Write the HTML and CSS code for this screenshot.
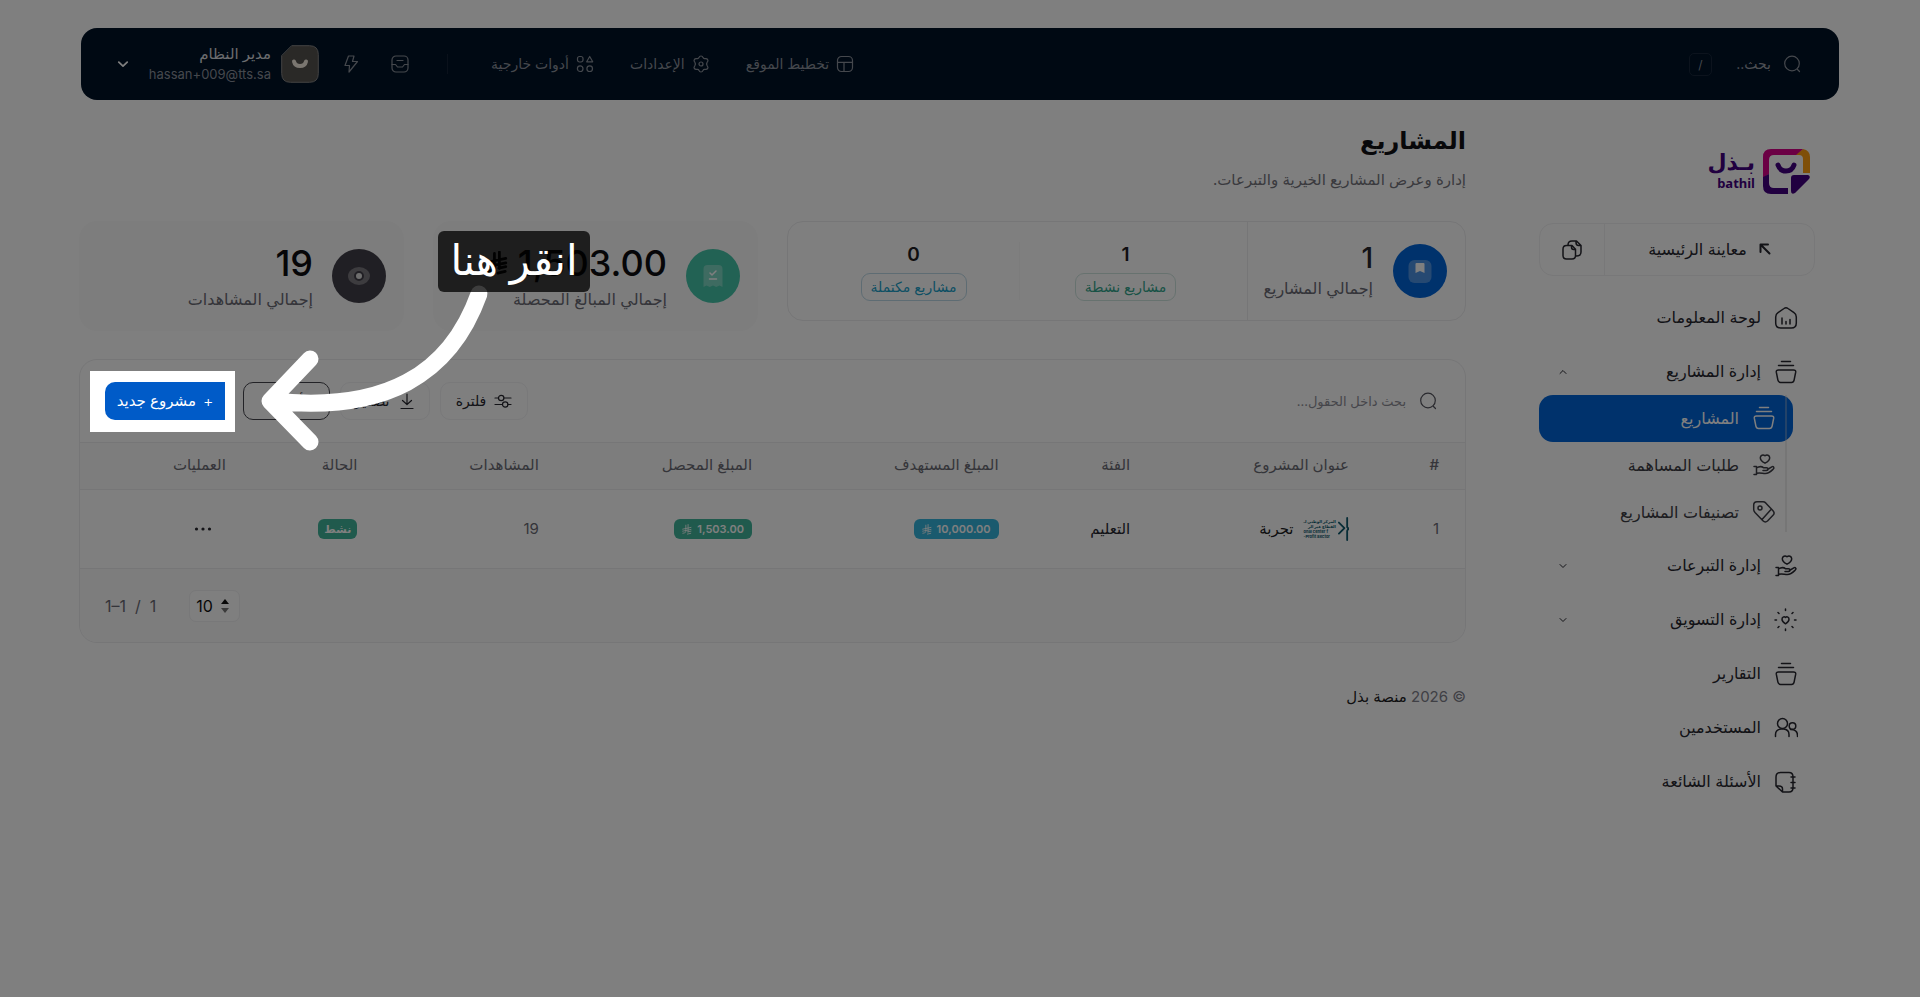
FILE: index.html
```html
<!DOCTYPE html>
<html lang="ar" dir="rtl">
<head>
<meta charset="utf-8">
<title>المشاريع</title>
<link rel="stylesheet" href="styles.css">
</head>
<body>
<svg class="defs" aria-hidden="true">
  <symbol id="search" viewBox="0 0 18 18"><circle cx="9" cy="8.500" r="7.300"/><path d="M14.500 14.500l2 2"/></symbol>
  <symbol id="basket" viewBox="0 0 24 24"><path d="M7.500 1.500h9M4.500 5.500h15M4.500 10h15q2.500 0 2.200 2.200l-1.600 8q-.5 2.300-2.600 2.300h-11q-2.100 0-2.600-2.300L2.300 12.200Q2 10 4.500 10z"/></symbol>
  <symbol id="hand" viewBox="0 0 24 24"><path d="M13 10.200C9 8 8.300 6.500 8.300 4.700c0-2.400 2.800-3.600 4.700-1.900 1.900-1.700 4.700-.5 4.700 1.900 0 1.800-.7 3.300-4.700 5.500zM2 13.500h2.500v8H2M4.500 15c3-2 5.500-1.500 7.300-.2h2.700c2 0 2 2.700 0 2.700h-3.500M15.500 16.500l4.300-2.700c1.600-.9 2.900.9 1.500 2.200-2 2-4 4.500-8 4.500-3 0-5-1.200-8.800-.2"/></symbol>
  <symbol id="down" viewBox="0 0 10 10"><path d="M2 3.500l3 3 3-3"/></symbol>
  <symbol id="up" viewBox="0 0 10 10"><path d="M2 6.500l3-3 3 3"/></symbol>
  <symbol id="riyal" viewBox="0 0 12 12"><path d="M4.600.8v7.400q0 1.500-1.800 1.900L1 10.500M7.300 0v9M.8 5.600l10-2.100M.8 8l10-2.100M7 8.800l3.800-.8M6.500 11.500l4-.9"/></symbol>
</svg>

<header class="topbar">
  <label class="quick"><svg class="i18"><use href="#search"/></svg><input class="quick-input" type="search" placeholder="بحث.."></label>
  <kbd class="key">/</kbd>
  <nav class="menu">
    <a href="#" class="menu-link"><svg class="i18" viewBox="0 0 18 18"><rect x="1.500" y="1.500" width="15" height="15" rx="4"/><path d="M1.500 7.300h15M8 7.300v9.200"/></svg>تخطيط الموقع</a>
    <a href="#" class="menu-link"><svg class="i18" viewBox="0 0 18 18"><path d="M9 1q1.500 0 2 1.600.6 1.400 2.200 1 1.800-.3 2.500 1 .8 1.300-.5 2.600-1.200 1.800 0 3.600 1.300 1.300.5 2.600-.7 1.300-2.500 1-1.600-.4-2.200 1Q10.500 17 9 17t-2-1.600q-.6-1.400-2.200-1-1.800.3-2.500-1-.8-1.300.5-2.600 1.200-1.800 0-3.600-1.300-1.300-.5-2.600.7-1.300 2.500-1 1.600.4 2.200-1Q7.500 1 9 1z"/><circle cx="9" cy="9" r="2"/></svg>الإعدادات</a>
    <a href="#" class="menu-link"><svg class="i18" viewBox="0 0 18 18"><rect x="1.500" y="1.500" width="5.500" height="5.500" rx="2"/><path d="M13.700 1.500l3 5.300h-6z"/><circle cx="4.200" cy="13.700" r="2.800"/><circle cx="13.700" cy="13.700" r="2.800"/></svg>أدوات خارجية</a>
  </nav>
  <span class="bar-line"></span>
  <button class="icon-btn" aria-label="الوارد"><svg class="i18" viewBox="0 0 18 18"><rect x="1" y="1" width="16" height="16" rx="4"/><path d="M1 9.500h3.500l2 2.500h5l2-2.500H17M6 5.500h6"/></svg></button>
  <button class="icon-btn bolt" aria-label="إجراءات سريعة"><svg class="i18" viewBox="0 0 18 18"><path d="M6.500 1h5.500l-1.500 5.500h5L7 17l.5-6.500H3z"/></svg></button>
  <button class="account">
    <svg class="avatar" viewBox="0 0 38 38"><path class="avatar-bg" d="M11 .7h17.500q8.800 0 8.800 8.800v19q0 8.800-8.800 8.800h-19q-8.800 0-8.800-8.800V11z"/><path class="avatar-smile" d="M13 16.500q1 4.500 6 4.500t6-4.500"/></svg>
    <span class="who"><strong class="who-name">مدير النظام</strong><span class="who-mail" dir="ltr">hassan+009@tts.sa</span></span>
    <svg class="who-more" viewBox="0 0 10 10"><path d="M1.500 3.500l3.500 3.200 3.500-3.200"/></svg>
  </button>
</header>

<div class="layout">
  <aside class="side">
    <a href="#" class="brand">
      <svg class="brand-mark" viewBox="0 0 47 45"><path class="orange" d="M40 0q7 1.500 7 8v16h-7V10q0-4-4-4h-4z"/><path class="pink" d="M8 0h32l-7 6H11Q6 6 6 11v14l-6 4V8q0-8 8-8z"/><path class="violet" d="M0 28l6-3v9q0 5 5 5h14v6H8q-8 0-8-8zM31 26h14q3 1 1 4L32 44q-4 2-4-2V29q0-3 3-3z"/><path class="smile" d="M15 16q2 6 8 6t8-6"/></svg>
      <span class="brand-text"><span class="brand-ar">بـذل</span><span class="brand-en" dir="ltr">bathil</span></span>
    </a>
    <div class="preview">
      <a href="#" class="preview-link"><svg class="i12" viewBox="0 0 12 12"><path d="M1.500 9V1.500H9M2 2l8.500 8.500"/></svg>معاينة الرئيسية</a>
      <button class="preview-copy" aria-label="نسخ"><svg class="i20" viewBox="0 0 20 20"><path d="M6 5.500V5q0-4 4-4h4.500L19 5.500V12q0 4-4.500 4M14 1v1.500q0 3 2.500 3H19M1 9q0-3.500 3.500-3.500H10l3.500 3.800V15.500q0 3.500-3.500 3.500H4.500Q1 19 1 15.500zM9.500 5.500V7q0 2.500 2 2.500h2"/></svg></button>
    </div>
    <nav class="nav">
      <a href="#" class="item"><svg class="i24" viewBox="0 0 24 24"><path d="M10 2.500q2-1.500 4 0l6 4.200q2.300 1.500 2.300 4.300v6q0 5-5 5H6.700q-5 0-5-5v-6q0-2.800 2.300-4.300zM8 12v6M12 15.500V18M16 13.500V18"/></svg><span class="label">لوحة المعلومات</span></a>
      <div class="group">
        <a href="#" class="item"><svg class="i24"><use href="#basket"/></svg><span class="label">إدارة المشاريع</span><svg class="chev"><use href="#up"/></svg></a>
        <div class="sub">
          <a href="#" class="subitem active"><svg class="i24"><use href="#basket"/></svg>المشاريع</a>
          <a href="#" class="subitem"><svg class="i24"><use href="#hand"/></svg>طلبات المساهمة</a>
          <a href="#" class="subitem"><svg class="i24" viewBox="0 0 24 24"><path d="M5 1.700h6q1.500 0 2.700 1.200l7.300 7.800q2.200 2.300 0 4.600L15.500 21q-2.300 2-4.600-.3L3 12.500Q1.700 11 1.700 9.500V5q0-3.300 3.300-3.300zM10 19.500l9-10"/><circle cx="8" cy="8" r="2"/></svg>تصنيفات المشاريع</a>
        </div>
      </div>
      <a href="#" class="item"><svg class="i24"><use href="#hand"/></svg><span class="label">إدارة التبرعات</span><svg class="chev"><use href="#down"/></svg></a>
      <a href="#" class="item"><svg class="i24" viewBox="0 0 24 24"><path d="M11.500 15.800C8.500 14 8 12.800 8 11.200c0-2.100 2-3 3.500-1.800C13 8.200 15 9.100 15 11.200c0 1.600-.5 2.800-3.500 4.600zM11.500 1v1.500M11.500 21v1.500M1 12h1.500M20.500 12H22M4 4.500l1 1M18 18.500l1 1M19 4.500l-1 1M5 18.500l-1 1"/></svg><span class="label">إدارة التسويق</span><svg class="chev"><use href="#down"/></svg></a>
      <a href="#" class="item"><svg class="i24"><use href="#basket"/></svg><span class="label">التقارير</span></a>
      <a href="#" class="item"><svg class="i24" viewBox="0 0 24 24"><circle cx="8.500" cy="7.500" r="5"/><circle cx="18.500" cy="10" r="3.300"/><path d="M1.500 20.500v-2q0-5 6-5.500h2q5.500.5 5.500 5.500v2M16.500 13.500q7 0 7 6v1"/></svg><span class="label">المستخدمين</span></a>
      <a href="#" class="item"><svg class="i24" viewBox="0 0 24 24"><path d="M2 7q0-4.500 4.500-4.500H15q4 0 4 4.500v10.500q0 4.500-4 4.500H8.500L2 16zM2 16h3q3.500 0 3.500 3v3M17 7h4M17 12.500h4M17 18h4"/></svg><span class="label">الأسئلة الشائعة</span></a>
    </nav>
  </aside>

  <main class="main">
    <h1 class="title">المشاريع</h1>
    <p class="lead">إدارة وعرض المشاريع الخيرية والتبرعات.</p>

    <section class="stats">
      <div class="projects">
        <div class="total">
          <svg class="disc" viewBox="0 0 54 54"><circle class="blue" cx="27" cy="27" r="27"/><rect class="veil" x="15.500" y="16" width="23" height="23" rx="6"/><path class="white" d="M22.500 20q0-1 1-1h7q1 0 1 1v9l-4.500-2-4.500 2z"/></svg>
          <div class="figures"><b class="num">1</b><span class="cap">إجمالي المشاريع</span></div>
        </div>
        <div class="part"><b class="part-num">1</b><span class="pill green">مشاريع نشطة</span></div>
        <span class="part-line"></span>
        <div class="part"><b class="part-num">0</b><span class="pill cyan">مشاريع مكتملة</span></div>
      </div>
      <div class="stat">
        <svg class="disc" viewBox="0 0 54 54"><circle class="teal" cx="27" cy="27" r="27"/><path class="veil" d="M17.500 20q0-4 4-4h11q4 0 4 4v18l-3-1.500-3.300 1.500-3.200-1.500-3.200 1.500-3.300-1.500-3 1.500z"/><path class="mark" d="M24 24l2 2 4-4M23.500 30h7"/></svg>
        <div class="figures"><b class="big" dir="ltr"><svg class="riyal-big"><use href="#riyal"/></svg>1,503.00</b><span class="cap">إجمالي المبالغ المحصلة</span></div>
      </div>
      <div class="stat">
        <svg class="disc" viewBox="0 0 54 54"><circle class="dark" cx="27" cy="27" r="27"/><ellipse class="veil" cx="27" cy="27" rx="11" ry="9"/><circle class="pupil" cx="27" cy="27" r="4"/></svg>
        <div class="figures"><b class="big">19</b><span class="cap">إجمالي المشاهدات</span></div>
      </div>
    </section>

    <section class="card">
      <div class="tools">
        <label class="find"><svg class="i18"><use href="#search"/></svg><input class="find-input" type="search" placeholder="بحث داخل الحقول..."></label>
        <button class="btn filter"><svg class="i18" viewBox="0 0 18 18"><path d="M1 6h3.500M10 6h7M1 12.500h7.500M14 12.500h3"/><circle cx="7.200" cy="6" r="2.700"/><circle cx="11.200" cy="12.500" r="2.700"/></svg>فلترة</button>
        <button class="btn export"><svg class="i18" viewBox="0 0 18 18"><path d="M9 2v10.500M4.500 8.500l4.500 4 4.500-4M3 16.500h12"/></svg>تصدير</button>
        <button class="btn outlined">أدوات</button>
        <div class="spotlight">
          <button class="create"><span class="plus">+</span>مشروع جديد</button>
          <svg class="arrow" viewBox="0 0 260 180"><path d="M229 13C200 94 135 132 22 120M60 78L20 120l40 41"/></svg>
          <div class="hint">انقر هنا</div>
        </div>
      </div>
      <table class="table">
        <colgroup><col class="c-id"><col class="c-title"><col class="c-cat"><col class="c-goal"><col class="c-sum"><col class="c-views"><col class="c-state"><col class="c-ops"></colgroup>
        <thead><tr><th>#</th><th>عنوان المشروع</th><th>الفئة</th><th>المبلغ المستهدف</th><th>المبلغ المحصل</th><th>المشاهدات</th><th>الحالة</th><th>العمليات</th></tr></thead>
        <tbody><tr>
          <td>1</td>
          <td><span class="project"><span class="thumb"><svg class="thumb-mark" viewBox="0 0 12 24"><path d="M10 0v10l2 2M10 24V14l1-2M1 5l6 6-6 6"/></svg><span class="thumb-text"><span>المركز الوطني لـ</span><span>القطاع غير الر</span><span dir="ltr">onal center f</span><span dir="ltr">-Profit Sector</span></span></span>تجربة</span></td>
          <td class="strong">التعليم</td>
          <td><span class="tag bg-cyan" dir="ltr"><svg class="riyal"><use href="#riyal"/></svg>10,000.00</span></td>
          <td><span class="tag bg-green" dir="ltr"><svg class="riyal"><use href="#riyal"/></svg>1,503.00</span></td>
          <td>19</td>
          <td><span class="tag state">نشط</span></td>
          <td><button class="more" aria-label="خيارات"><svg class="i18" viewBox="0 0 18 18"><circle cx="2.500" cy="9" r="1.600"/><circle cx="9" cy="9" r="1.600"/><circle cx="15.500" cy="9" r="1.600"/></svg></button></td>
        </tr></tbody>
      </table>
      <div class="pager">
        <label class="size"><svg class="size-arrows" viewBox="0 0 8 16"><path d="M0 6l4-5 4 5z"/><path class="faint" d="M0 10l4 5 4-5z"/></svg><select class="size-select" aria-label="عدد الصفوف"><option>10</option></select></label>
        <span class="range" dir="ltr"><span>1–1</span><span>/</span><span>1</span></span>
      </div>
    </section>
    <footer class="foot">© 2026 <a href="#" class="foot-link">منصة بذل</a></footer>
  </main>
</div>
</body>
</html>
```
FILE: styles.css
```css
* { box-sizing: border-box; }
body { margin: 0; min-height: 100vh; padding: 28px 81px 0 79px; background: #fff; color: #26262e; font: 15px/20px Inter, "DejaVu Sans", sans-serif; }
a { color: inherit; text-decoration: none; }
button, input, select { font: inherit; color: inherit; background: none; border: 0; padding: 0; margin: 0; outline: 0; }
svg { fill: none; stroke: currentColor; stroke-width: 1.5; stroke-linecap: round; stroke-linejoin: round; flex: none; display: block; }
.defs { position: absolute; width: 0; height: 0; }
.i12 { width: 12px; height: 12px; stroke-width: 2; }
.i18 { width: 18px; height: 18px; stroke-width: 1.2; }
.i20 { width: 20px; height: 20px; }
.i24 { width: 24px; height: 24px; }

.topbar { display: flex; align-items: center; height: 72px; margin-left: 2px; padding: 0 38px 0 36px; border-radius: 16px; background: #001226; color: #8b919b; }
.quick { display: flex; align-items: center; gap: 12px; width: 89px; font-size: 14px; }
.quick-input { width: 56px; }
.quick-input::placeholder { color: #9a9fa8; opacity: 1; }
.key { display: flex; align-items: center; justify-content: center; width: 23px; height: 23px; margin-left: auto; border: 1px solid #18273b; border-radius: 5px; font: 12px Inter, sans-serif; }
.menu { display: flex; gap: 36px; }
.menu-link { display: flex; align-items: center; gap: 7px; font-size: 14px; white-space: nowrap; }
.bar-line { width: 1px; height: 20px; margin: 0 43px 0 38px; background: #142236; }
.icon-btn { margin-left: 31px; }
.bolt { margin-left: 23px; }
.account { display: flex; align-items: center; gap: 10px; }
.avatar { width: 38px; height: 38px; }
.avatar-bg { fill: #55524f; stroke: #858585; stroke-width: 1; }
.avatar-smile { stroke: #f4ece0; stroke-width: 4; }
.who { display: flex; flex-direction: column; width: 132px; text-align: right; }
.who-name { color: #d8dade; font-size: 15px; font-weight: 500; }
.who-mail { font-size: 13px; }
.who-more { width: 12px; height: 12px; color: #fff; }

.layout { display: flex; gap: 73px; }
.side { flex: none; width: 300px; padding: 49px 24px 0 0; }
.main { flex: 1; min-width: 0; padding-top: 24px; }

.brand { display: flex; gap: 8px; padding-right: 5px; }
.brand-mark { width: 47px; height: 45px; stroke: none; }
.orange { fill: #ff9f10; }
.pink { fill: #d60088; }
.violet { fill: #430080; }
.smile { stroke: #430080; stroke-width: 5; }
.brand-text { display: flex; flex-direction: column; align-items: flex-start; color: #430080; font-weight: 700; }
.brand-ar { font-size: 22px; line-height: 26px; }
.brand-en { font: 700 13px/16px "Noto Sans", sans-serif; }

.preview { display: flex; height: 53px; margin-top: 29px; border: 1px solid #f0f0f2; border-radius: 14px; }
.preview-link { flex: 1; display: flex; align-items: center; justify-content: center; gap: 12px; padding-bottom: 2px; font-size: 16px; }
.preview-copy { display: flex; align-items: center; justify-content: center; width: 65px; border-right: 1px solid #f0f0f2; }
.nav { padding-top: 15px; font-size: 16px; }
.item { display: flex; align-items: center; gap: 13px; height: 54px; padding: 0 17px 0 19px; }
.label { flex: 1; padding-bottom: 2px; }
.chev { width: 10px; height: 10px; stroke-width: 1; }
.sub { margin: -4px 22px 3px 0; position: relative; }
.sub::before { content: ""; position: absolute; top: 0; bottom: 4px; right: 6px; width: 2px; background: rgba(200, 200, 200, .35); }
.subitem { display: flex; align-items: center; gap: 13px; height: 47px; padding: 0 17px 2px 0; color: #3c3c44; }
.active { color: #fff; background: #0064d8; border-radius: 14px; }

.title { margin: 0; font-size: 24px; line-height: 34px; font-weight: 600; color: #101014; }
.lead { margin: 10px 0 0; line-height: 24px; color: #74747c; }
.stats { display: grid; grid-template-columns: 679fr 325fr 325fr; align-items: start; gap: 29px; margin-top: 29px; }
.projects { display: flex; height: 100px; padding-left: 20px; border: 1px solid #ececee; border-radius: 16px; align-items: center; }
.total { display: flex; align-items: center; gap: 20px; width: 218px; height: 98px; margin-left: 16px; padding-right: 18px; border-left: 1px solid #ececee; }
.disc { width: 54px; height: 54px; stroke: none; }
.blue { fill: #0064d8; }
.teal { fill: #45c4a8; }
.dark { fill: #413e48; }
.veil { fill: #fff; fill-opacity: .3; }
.white { fill: #fff; }
.mark { stroke: #fff; stroke-width: 1.5; }
.pupil { stroke: #413e48; stroke-width: 2; fill: #ddd; }
.figures { display: flex; flex-direction: column; white-space: nowrap; }
.num { font-size: 28px; line-height: 32px; font-weight: 500; }
.cap { margin-top: 2px; font-size: 16px; line-height: 24px; color: #6a6a74; }
.part { flex: 1; display: flex; flex-direction: column; align-items: center; gap: 4px; color: #1c1c22; }
.part-num { font-size: 19px; line-height: 28px; font-weight: 600; }
.part-line { width: 1px; height: 58px; background: #f8f8f9; }
.pill { padding: 3px 9px; border: 1px solid; border-radius: 9px; font-size: 14px; }
.green { color: #32a58c; border-color: #cfe4df; }
.cyan { color: #1ba0c8; border-color: #bcd8e6; }
.stat { display: flex; align-items: center; gap: 19px; height: 110px; padding-right: 18px; border-radius: 18px; background: #fbfbfb; }
.big { display: flex; align-items: center; gap: 10px; font-size: 36px; line-height: 44px; font-weight: 500; color: #0c0c10; }
.stat .figures .big { align-self: flex-start; }
.riyal-big { width: 22px; height: 24px; }

.card { margin-top: 28px; border: 1px solid #ececee; border-radius: 18px; }
.tools { display: flex; align-items: center; height: 82px; padding: 0 28px 0 10px; }
.find { display: flex; align-items: center; gap: 13px; margin-left: auto; color: #55555e; }
.find-input { width: 240px; font-size: 13px; }
.find-input::placeholder { color: #8d8d96; opacity: 1; }
.btn { display: flex; align-items: center; justify-content: center; gap: 8px; height: 38px; margin-left: 10px; border: 1px solid #f2f2f4; border-radius: 10px; font-size: 14px; }
.filter { width: 88px; }
.export { width: 90px; }
.outlined { width: 87px; margin-left: 8px; border-color: #45454d; }
.spotlight { position: relative; z-index: 10; display: flex; align-items: center; height: 61px; width: 145px; padding: 0 10px 0 15px; background: #fff; box-shadow: 0 0 0 9999px rgba(0, 0, 0, .5); }
.create { flex: 1; height: 38px; display: flex; align-items: center; justify-content: center; gap: 7px; border-radius: 10px 0 0 10px; background: #005bc8; color: #fff; font-size: 15px; white-space: nowrap; }
.plus { font-size: 16px; font-weight: 300; }
.arrow { position: absolute; left: 160px; top: -90px; width: 260px; height: 180px; color: #fff; stroke-width: 17; overflow: visible; }
.hint { position: absolute; left: 348px; top: -140px; width: 152px; height: 61px; border-radius: 6px; background: rgba(0, 0, 0, .76); color: #fff; font-size: 42px; line-height: 58px; text-align: center; white-space: nowrap; }

.table { width: 100%; table-layout: fixed; border-collapse: separate; border-spacing: 0; }
.c-id { width: 6.5%; } .c-title { width: 15.8%; } .c-cat { width: 9.5%; } .c-goal { width: 17.8%; }
.c-sum { width: 15.4%; } .c-views { width: 13.1%; } .c-state { width: 9.5%; } .c-ops { width: 12.4%; }
.table th { height: 48px; padding: 0 26px 3px 0; text-align: right; font-size: 15px; font-weight: 500; color: #6a6a74; background: #fafafa; border-top: 1px solid #ededef; border-bottom: 1px solid #ededef; }
.table td { height: 79px; padding: 0 26px 0 0; font-size: 15px; color: #6a6a74; border-bottom: 1px solid #ededef; }
.table td.strong { color: #26262e; }
.project { display: flex; align-items: center; gap: 10px; color: #1c1c22; font-weight: 500; }
.thumb { display: flex; align-items: center; gap: 2px; color: #0e5a6e; }
.thumb-mark { width: 11px; height: 24px; stroke-width: 2; }
.thumb-text { display: flex; flex-direction: column; font-size: 4px; line-height: 5px; font-weight: 700; white-space: nowrap; }
.tag { display: inline-flex; align-items: center; gap: 5px; height: 20px; padding: 0 8px; border-radius: 6px; color: #fff; font-size: 11px; font-weight: 600; vertical-align: middle; }
.bg-cyan { background: #34b4dc; }
.bg-green, .state { background: #40b49a; }
.state { padding: 0 6px; }
.riyal { width: 10px; height: 11px; stroke-width: 1; }
.more { display: block; margin-right: 14px; color: #26262e; }
.more circle { fill: currentColor; stroke: none; }
.pager { display: flex; align-items: center; justify-content: flex-end; gap: 33px; height: 73px; padding-left: 25px; background: #fafafa; border-radius: 0 0 18px 18px; font-size: 16px; color: #6a6a74; }
.size { display: flex; align-items: center; gap: 8px; width: 51px; height: 32px; padding: 0 10px 0 6px; border: 1px solid #f0f0f2; border-radius: 7px; background: #fff; color: #111; }
.size-arrows { width: 8px; height: 16px; fill: #111; stroke: none; }
.faint { fill: #777; }
.size-select { appearance: none; width: 22px; direction: ltr; }
.range { display: flex; gap: 9px; }
.foot { margin-top: 44px; color: #80808a; }
.foot-link { color: #1c1c22; font-weight: 500; }
```
